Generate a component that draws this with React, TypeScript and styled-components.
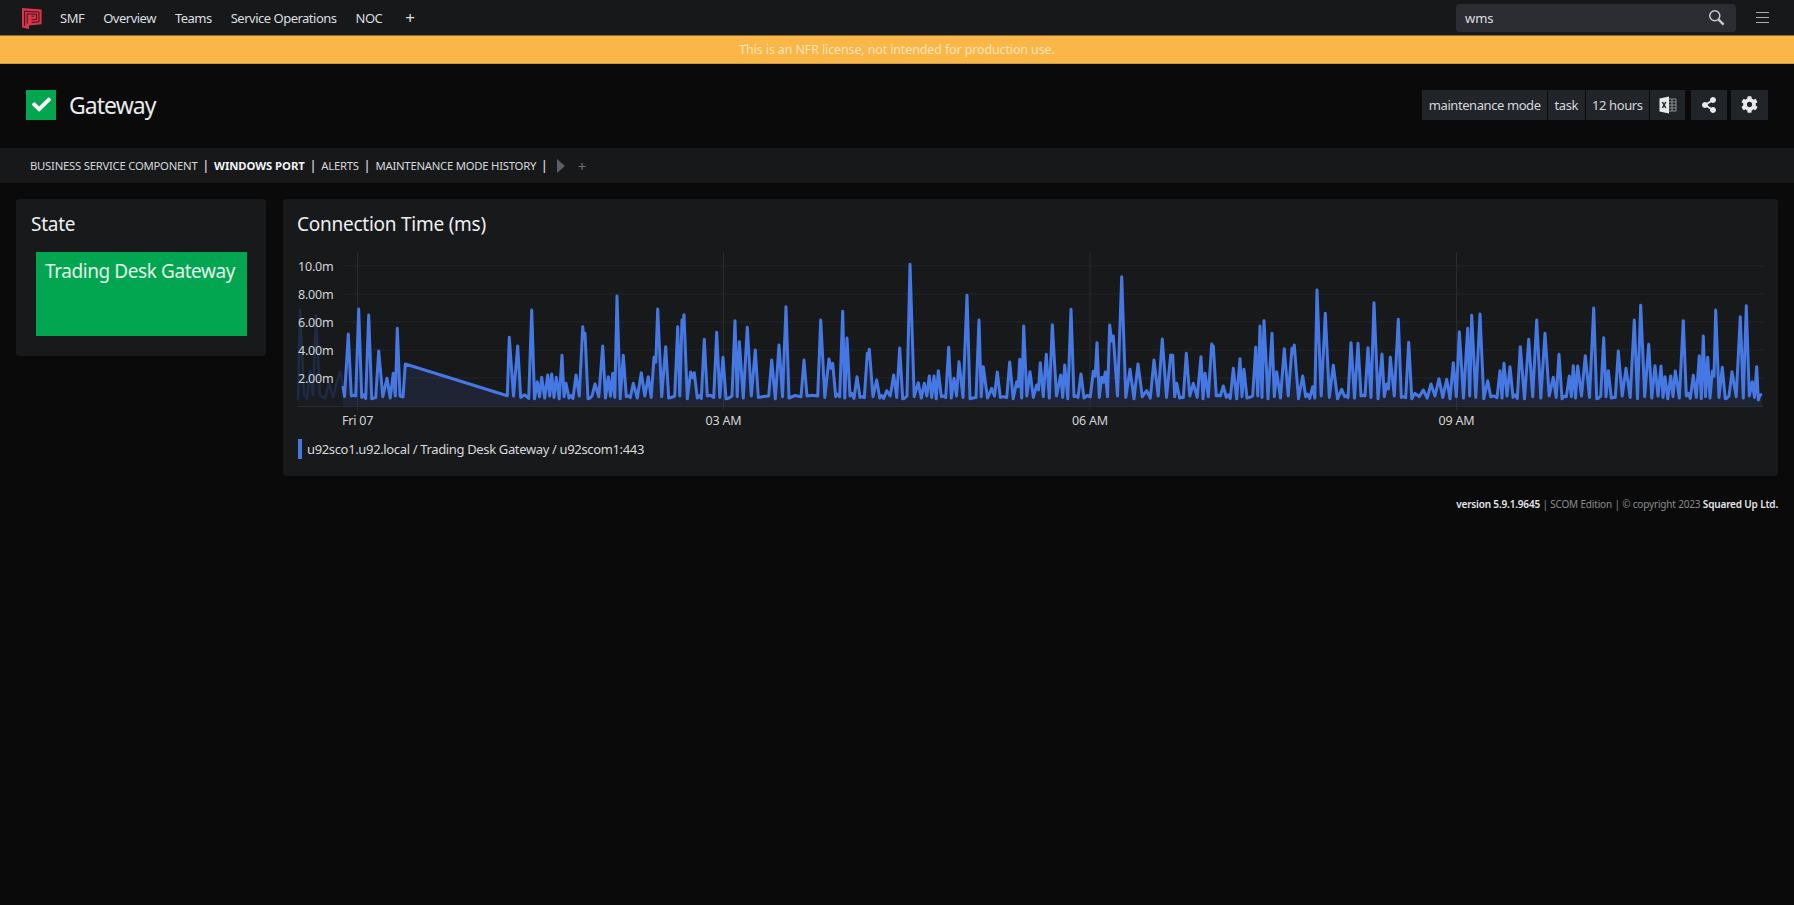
import React from 'react';
import styled, { createGlobalStyle } from 'styled-components';
import { FaCheck, FaCog, FaShareAlt } from 'react-icons/fa';

const GlobalStyle = createGlobalStyle`
  html, body {
    margin: 0;
    background: #0a0a0b;
    font-family: "Noto Sans", "Open Sans", "Liberation Sans", sans-serif;
    color: #e4e6ea;
  }
  * { box-sizing: border-box; }
`;

type Pt = [number, number];

// peak positions read off the chart, one list per 500px slice
const early: Pt[] = [[205, 282], [236, 207], [266, 225], [296, 333], [321, 415], [340, 400], [352, 265]];
const sliceA: Pt[] = [[688, 292], [713, 318], [755, 210], [772, 425], [785, 412], [803, 405], [815, 402], [829, 412], [846, 346], [858, 430], [888, 405], [908, 260], [915, 280], [945, 432], [968, 318], [985, 410], [998, 400], [1011, 168], [1030, 346], [1060, 430], [1084, 398], [1105, 410], [1122, 352], [1133, 207], [1157, 320], [1193, 260], [1206, 240], [1212, 224], [1232, 396], [1243, 398], [1273, 298], [1310, 277], [1329, 352], [1365, 242], [1378, 305], [1402, 262], [1426, 330], [1475, 360], [1497, 315]];
const sliceB: Pt[] = [[18, 200], [72, 360], [122, 240], [147, 357], [158, 370], [188, 214], [201, 294], [231, 410], [262, 340], [268, 328], [290, 420], [320, 452], [341, 405], [359, 324], [390, 73], [415, 428], [433, 430], [448, 408], [462, 408], [475, 392], [506, 322], [522, 415], [537, 365], [561, 166], [597, 240], [610, 380], [635, 445], [652, 396], [689, 366], [710, 425], [719, 358], [731, 258], [750, 395], [770, 435], [781, 368], [799, 343], [817, 254], [842, 405], [854, 375], [873, 208], [903, 402], [940, 394], [951, 308], [965, 412], [976, 396], [989, 255], [1000, 288], [1025, 110], [1050, 388], [1074, 372], [1100, 452], [1122, 360], [1147, 297], [1172, 345], [1178, 346], [1190, 430], [1219, 340], [1240, 430], [1263, 350], [1275, 400], [1295, 312], [1300, 318], [1330, 438], [1360, 385], [1380, 356], [1392, 388], [1427, 322], [1440, 258], [1452, 242], [1476, 280], [1490, 395]];
const sliceC: Pt[] = [[13, 326], [36, 325], [43, 315], [68, 408], [98, 440], [111, 150], [136, 220], [160, 376], [185, 448], [213, 308], [234, 310], [264, 323], [282, 188], [306, 342], [320, 432], [331, 352], [355, 238], [386, 307], [405, 460], [430, 450], [453, 432], [477, 416], [500, 418], [520, 368], [538, 275], [563, 265], [575, 226], [600, 222], [623, 422], [660, 392], [672, 370], [690, 380], [721, 320], [746, 298], [770, 240], [795, 280], [820, 412], [837, 343], [868, 408], [880, 377], [893, 378], [916, 347], [941, 204], [971, 293], [985, 392], [1015, 333], [1038, 385], [1063, 240], [1082, 196], [1106, 313], [1125, 377], [1143, 378], [1155, 410], [1172, 408], [1186, 393], [1210, 242], [1240, 406], [1258, 347], [1270, 288], [1283, 352], [1297, 394], [1307, 210], [1327, 382], [1356, 395], [1381, 230], [1399, 197], [1417, 425], [1430, 380], [1440, 465]];

const toPage = (pts: Pt[], left: number): Pt[] => pts.map(([x, y]) => [left + x / 3, 240 + y / 3]);

// spikes with a trough between each pair
const spikes = (pts: Pt[]): Pt[] => {
  const out: Pt[] = [];
  pts.forEach((p, i) => {
    out.push(p);
    const next = pts[i + 1];
    if (!next) return;
    const dx = next[0] - p[0];
    const low = 396 + ((i * 7) % 5) * 0.7;
    if (dx < 4) {
      out.push([p[0] + dx / 2, Math.max(p[1], next[1]) + 5]);
    } else if (dx < 9) {
      out.push([p[0] + dx / 2, low]);
    } else {
      const d = Math.min(3, dx / 3);
      out.push([p[0] + d, low]);
      out.push([p[0] + dx / 2, low - (i % 2 ? 2.6 : 0.8)]);
      out.push([next[0] - d, 396 + ((i * 3) % 4) * 0.8]);
    }
  });
  return out;
};

const main: Pt[] = [
  [343, 386], [344.5, 396.5],
  ...spikes(toPage(early, 280)),
  [400, 396], [403, 397], [405.3, 364], [507.3, 395.7],
  ...spikes([
    ...toPage(sliceA, 280),
    ...toPage(sliceB, 780),
    ...toPage(sliceC, 1280),
  ]),
  [1762, 394],
];

const dimmed: Pt[] = [
  [298, 400], [300, 309], [304, 395], [307, 398], [310, 370], [313, 396], [316, 314], [320, 396], [325, 398], [329, 383], [333, 398], [336, 385], [340, 371], [343, 386],
];

const toLine = (pts: Pt[]) => pts.map(([x, y], i) => `${i ? 'L' : 'M'}${x.toFixed(1)} ${y.toFixed(1)}`).join(' ');
const linePath = toLine(main);
const areaPath = `${linePath} L1762 406 L343 406 Z`;

const navItems = ['SMF', 'Overview', 'Teams', 'Service Operations', 'NOC'];
const tabs = [
  { label: 'BUSINESS SERVICE COMPONENT' },
  { label: 'WINDOWS PORT', active: true },
  { label: 'ALERTS' },
  { label: 'MAINTENANCE MODE HISTORY' },
];
const yTicks = [
  { label: '10.0m', y: 266 },
  { label: '8.00m', y: 294 },
  { label: '6.00m', y: 322 },
  { label: '4.00m', y: 350 },
  { label: '2.00m', y: 378 },
];
const xTicks = [
  { label: 'Fri 07', x: 357.5 },
  { label: '03 AM', x: 723.5 },
  { label: '06 AM', x: 1090 },
  { label: '09 AM', x: 1456.5 },
];

const Logo = () => (
  <svg width="20" height="21" viewBox="0 0 20 21">
    <path d="M0 0 L19.6 1.6 L19.6 16.2 L7 17.4 L7 21 L0 19.6 Z" fill="#d8344b" />
    <path d="M2.6 3 V17.8 M2.6 3.2 L17 4.2 V13.8 L9.6 14.5 M5.2 15.6 V5.8 L14.6 6.4 V11.4 L9.6 11.9 M9.6 8.2 H11.8" fill="none" stroke="#3d1219" strokeWidth="1" />
  </svg>
);

const SearchGlyph = () => (
  <svg width="17" height="17" viewBox="0 0 17 17">
    <circle cx="6.8" cy="6.8" r="5" fill="none" stroke="#c8c9cc" strokeWidth="1.5" />
    <path d="M10.6 10.6 L15.6 15.6" stroke="#c8c9cc" strokeWidth="2.4" />
  </svg>
);

const ExcelIcon = () => (
  <svg width="18" height="18" viewBox="0 0 18 18">
    <path d="M9 3 H17 V15 H9" fill="none" stroke="#8d9096" strokeWidth="1" />
    <path d="M10 6 H17 M10 9 H17 M10 12 H17 M13 3 V15" stroke="#8d9096" strokeWidth="1" />
    <path d="M0.5 2.4 L10 0.5 V17.5 L0.5 15.6 Z" fill="#e8e9ea" />
    <path d="M3.4 6 L6.8 12 M6.8 6 L3.4 12" stroke="#212429" strokeWidth="1.5" />
  </svg>
);

const Chart = () => (
  <ChartSvg viewBox="284 240 1494 190">
    {yTicks.map((t) => (
      <line key={t.y} x1="343" x2="1763" y1={t.y} y2={t.y} stroke="#25262a" />
    ))}
    {xTicks.map((t) => (
      <line key={t.x} x1={t.x} x2={t.x} y1="252" y2="410" stroke="#2a2b2f" />
    ))}
    <line x1="298" x2="1763" y1="406.5" y2="406.5" stroke="#2b2c31" />
    <path d={`${toLine(dimmed)} L343 406 L298 406 Z`} fill="#1a1c22" />
    <path d={toLine(dimmed)} fill="none" stroke="#1f2a44" strokeWidth="2.5" />
    <path d={areaPath} fill="#4678e4" fillOpacity="0.12" />
    <path d={linePath} fill="none" stroke="#4678e4" strokeWidth="3" strokeLinejoin="round" />
    {yTicks.map((t) => (
      <AxisText key={t.label} x="298" y={t.y + 4.5}>{t.label}</AxisText>
    ))}
    {xTicks.map((t) => (
      <AxisText key={t.label} x={t.x} y="424.5" textAnchor="middle">{t.label}</AxisText>
    ))}
  </ChartSvg>
);

export default function App() {
  return (
    <Page>
      <GlobalStyle />
      <TopBar>
        <LogoWrap><Logo /></LogoWrap>
        <Nav>
          {navItems.map((item) => (
            <NavItem key={item}>{item}</NavItem>
          ))}
          <NavPlus>+</NavPlus>
        </Nav>
        <SearchBox>
          <SearchText>wms</SearchText>
          <SearchGlyph />
        </SearchBox>
        <Burger>
          <span />
          <span />
          <span />
        </Burger>
      </TopBar>

      <Banner>This is an NFR license, not intended for production use.</Banner>

      <Header>
        <StatusBox><FaCheck size={19} color="#fff" /></StatusBox>
        <Title>Gateway</Title>
        <Actions>
          <ActionGroup>
            <ActionButton>maintenance mode</ActionButton>
            <ActionButton>task</ActionButton>
            <ActionButton>12 hours</ActionButton>
            <IconButton $width={35}><ExcelIcon /></IconButton>
          </ActionGroup>
          <IconButton $width={36}><FaShareAlt size={16} color="#e8e9ea" /></IconButton>
          <IconButton $width={37}><FaCog size={17} color="#e8e9ea" /></IconButton>
        </Actions>
      </Header>

      <TabBar>
        {tabs.map((tab) => (
          <React.Fragment key={tab.label}>
            <Tab $active={tab.active}>{tab.label}</Tab>
            <TabDivider>|</TabDivider>
          </React.Fragment>
        ))}
        <TabArrow />
        <TabPlus>+</TabPlus>
      </TabBar>

      <Content>
        <StatePanel>
          <PanelTitle>State</PanelTitle>
          <StateTile>Trading Desk Gateway</StateTile>
        </StatePanel>
        <Right>
          <ChartPanel>
            <PanelTitle>Connection Time (ms)</PanelTitle>
            <Chart />
            <Legend>
              <LegendSwatch />
              u92sco1.u92.local / Trading Desk Gateway / u92scom1:443
            </Legend>
          </ChartPanel>
          <Footer>
            <b>version 5.9.1.9645</b> | SCOM Edition | © copyright 2023 <b>Squared Up Ltd.</b>
          </Footer>
        </Right>
      </Content>
    </Page>
  );
}

const Page = styled.div`
  min-height: 905px;
  background: #0a0a0b;
`;

const TopBar = styled.div`
  display: flex;
  align-items: center;
  height: 35px;
  padding-left: 22px;
  background: #17181a;
`;

const LogoWrap = styled.div`
  display: flex;
  width: 21px;
  margin-top: 1px;
`;

const Nav = styled.nav`
  display: flex;
  flex: 1;
  align-items: center;
  gap: 19px;
  margin-left: 17px;
`;

const NavItem = styled.a`
  font-size: 13px;
  letter-spacing: -0.5px;
  color: #dcdee2;
`;

const NavPlus = styled.span`
  margin-left: 4px;
  font-size: 17px;
  line-height: 1;
  color: #dcdee2;
`;

const SearchBox = styled.div`
  display: flex;
  align-items: center;
  justify-content: space-between;
  width: 280px;
  height: 28px;
  padding: 0 11px 0 9px;
  border-radius: 4px;
  background: #2c2d33;
`;

const SearchText = styled.span`
  font-size: 13px;
  color: #dcdee2;
`;

const Burger = styled.div`
  display: flex;
  flex-direction: column;
  gap: 3.5px;
  width: 13px;
  margin: 0 25px 0 20px;

  span {
    display: block;
    height: 1.5px;
    background: #a9abaf;
  }
`;

const Banner = styled.div`
  display: flex;
  align-items: center;
  justify-content: center;
  height: 29px;
  border-top: 1px solid #8a6a30;
  border-bottom: 1px solid #c89a48;
  background: #fab747;
  font-size: 12.5px;
  letter-spacing: -0.13px;
  color: #f6e4bc;
`;

const Header = styled.div`
  display: flex;
  align-items: center;
  height: 84px;
  padding: 0 26px 3px;
`;

const StatusBox = styled.div`
  display: flex;
  align-items: center;
  justify-content: center;
  width: 30px;
  height: 30px;
  background: #02a650;
`;

const Title = styled.h1`
  flex: 1;
  margin: 0 0 0 13px;
  font-size: 23px;
  font-weight: 400;
  letter-spacing: -0.95px;
  color: #e8eaee;
`;

const Actions = styled.div`
  display: flex;
  gap: 4px;
`;

const ActionGroup = styled.div`
  display: flex;
  gap: 1px;
  margin-right: 2px;
`;

const ActionButton = styled.div`
  display: flex;
  align-items: center;
  height: 30px;
  padding: 0 6.5px;
  background: #212429;
  font-size: 13px;
  letter-spacing: -0.42px;
  color: #d6d8dc;
`;

const IconButton = styled.div<{ $width: number }>`
  display: flex;
  align-items: center;
  justify-content: center;
  width: ${(p) => p.$width}px;
  height: 30px;
  background: #212429;
`;

const TabBar = styled.div`
  display: flex;
  align-items: center;
  gap: 5px;
  height: 35px;
  padding-left: 30px;
  background: #17181a;
`;

const Tab = styled.span<{ $active?: boolean }>`
  font-size: 11.3px;
  font-weight: ${(p) => (p.$active ? 700 : 400)};
  letter-spacing: ${(p) => (p.$active ? '-0.08px' : '-0.24px')};
  color: ${(p) => (p.$active ? '#f2f3f5' : '#d6d8dc')};
`;

const TabDivider = styled.span`
  font-size: 12px;
  font-weight: 600;
  color: #d6d8dc;
`;

const TabArrow = styled.span`
  width: 0;
  height: 0;
  margin-left: 4px;
  border-top: 7px solid transparent;
  border-bottom: 7px solid transparent;
  border-left: 8px solid #5c5e63;
`;

const TabPlus = styled.span`
  margin-left: 8px;
  font-size: 15px;
  color: #6d6f74;
`;

const Content = styled.div`
  display: flex;
  align-items: flex-start;
  gap: 17px;
  padding: 16px 16px 0;
`;

const StatePanel = styled.section`
  flex: none;
  width: 250px;
  height: 157px;
  padding: 11px 19px 0 15px;
  border-radius: 3px;
  background: #18191b;
`;

const PanelTitle = styled.h2`
  margin: 0;
  font-size: 19px;
  font-weight: 400;
  line-height: 28px;
  letter-spacing: -0.25px;
  color: #eef0f3;
`;

const StateTile = styled.div`
  width: 211px;
  height: 84px;
  margin: 14px 0 0 5px;
  padding: 6px 0 0 9px;
  background: #02a650;
  font-size: 19px;
  letter-spacing: -0.42px;
  white-space: nowrap;
  color: #e3f5ea;
`;

const Right = styled.div`
  flex: 1;
  min-width: 0;
`;

const ChartPanel = styled.section`
  height: 277px;
  padding-top: 11px;
  border-radius: 3px;
  background: #18191b;

  h2 {
    padding-left: 14px;
  }
`;

const ChartSvg = styled.svg`
  display: block;
  width: 1494px;
  height: 190px;
  margin: 2px 0 0 1px;
`;

const AxisText = styled.text`
  font-size: 12.5px;
  letter-spacing: -0.2px;
  fill: #d4d5d8;
`;

const Legend = styled.div`
  display: flex;
  align-items: center;
  gap: 5px;
  height: 20px;
  margin: 9px 0 0 15px;
  font-size: 13px;
  letter-spacing: -0.35px;
  color: #d8dade;
`;

const LegendSwatch = styled.span`
  width: 4px;
  height: 20px;
  background: #4678e4;
`;

const Footer = styled.div`
  margin: 21px 0 0;
  text-align: right;
  font-size: 10px;
  line-height: 14px;
  letter-spacing: -0.17px;
  color: #8a8c90;

  b {
    font-weight: 600;
    color: #e6e7ea;
  }
`;
